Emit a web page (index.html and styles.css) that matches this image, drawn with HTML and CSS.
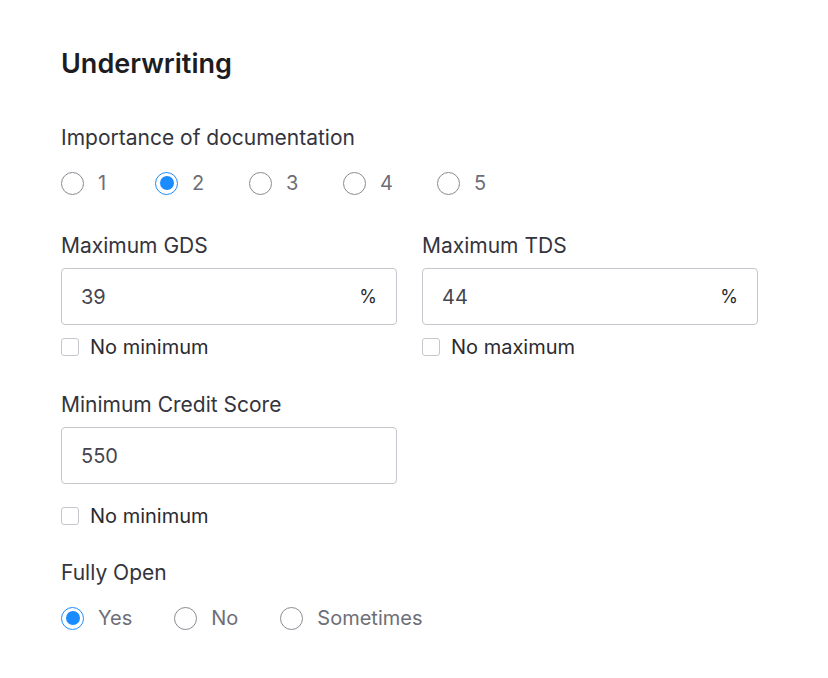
FILE: index.html
```html
<!DOCTYPE html>
<html lang="en">
<head>
    <meta charset="UTF-8">
    <meta name="viewport" content="width=device-width, initial-scale=1.0">
    <title>Underwriting</title>
    <link rel="stylesheet" href="styles.css">
</head>
<body>
    <div class="panel">
        <h1 class="panel-title">Underwriting</h1>

        <div class="field">
            <div class="field-label">Importance of documentation</div>
            <div class="radio-group radio-group-scale">
                <label class="radio"><span class="radio-circle"></span><span>1</span></label>
                <label class="radio"><span class="radio-circle checked"></span><span>2</span></label>
                <label class="radio"><span class="radio-circle"></span><span>3</span></label>
                <label class="radio"><span class="radio-circle"></span><span>4</span></label>
                <label class="radio"><span class="radio-circle"></span><span>5</span></label>
            </div>
        </div>

        <div class="field-row">
            <div class="field">
                <div class="field-label">Maximum GDS</div>
                <div class="input">
                    <span class="input-value">39</span>
                    <span class="input-suffix">%</span>
                </div>
                <label class="checkbox"><span class="checkbox-box"></span><span>No minimum</span></label>
            </div>
            <div class="field">
                <div class="field-label">Maximum TDS</div>
                <div class="input">
                    <span class="input-value">44</span>
                    <span class="input-suffix">%</span>
                </div>
                <label class="checkbox"><span class="checkbox-box"></span><span>No maximum</span></label>
            </div>
        </div>

        <div class="field field-half">
            <div class="field-label">Minimum Credit Score</div>
            <div class="input">
                <span class="input-value">550</span>
            </div>
            <label class="checkbox checkbox-spaced"><span class="checkbox-box"></span><span>No minimum</span></label>
        </div>

        <div class="field">
            <div class="field-label">Fully Open</div>
            <div class="radio-group">
                <label class="radio"><span class="radio-circle checked"></span><span>Yes</span></label>
                <label class="radio"><span class="radio-circle"></span><span>No</span></label>
                <label class="radio"><span class="radio-circle"></span><span>Sometimes</span></label>
            </div>
        </div>
    </div>
</body>
</html>
```

FILE: styles.css
```css
body {
    margin: 0;
    font-family: "Inter", "Noto Sans", sans-serif;
    background-color: #ffffff;
    color: #2b2b30;
}

.panel {
    padding: 47px 61px;
    width: 697px;
}

.panel-title {
    margin: 0 0 43px 0;
    font-size: 27px;
    font-weight: 600;
    color: #1c1c22;
    line-height: 34px;
}

.field {
    margin-bottom: 29px;
}

.field-label {
    font-size: 21px;
    line-height: 28px;
    color: #34343c;
    margin-bottom: 8px;
}

.radio-group {
    display: flex;
    align-items: center;
    gap: 42px;
    margin-top: 17px;
}

.radio-group-scale {
    gap: 0;
}

.radio-group-scale .radio {
    width: 94px;
}

.radio {
    display: inline-flex;
    align-items: center;
    gap: 14px;
    font-size: 20px;
    color: #6e6e78;
    line-height: 28px;
}

.radio-circle {
    width: 21px;
    height: 21px;
    border: 1.5px solid #8a8a92;
    border-radius: 50%;
    box-sizing: content-box;
    position: relative;
}

.radio-circle.checked {
    border-color: #1a8cff;
}

.radio-circle.checked::after {
    content: "";
    position: absolute;
    top: 3.5px;
    left: 3.5px;
    width: 14px;
    height: 14px;
    border-radius: 50%;
    background-color: #1a8cff;
}

.field-row {
    display: grid;
    grid-template-columns: 336px 336px;
    gap: 25px;
    margin-top: 35px;
}

.field-row .field {
    margin-bottom: 30px;
}

.field-half {
    width: 336px;
}

.input {
    height: 55px;
    border: 1px solid #c6c6cc;
    border-radius: 4px;
    display: flex;
    align-items: center;
    justify-content: space-between;
    padding: 0 19px;
    font-size: 20px;
    color: #45454e;
}

.input-suffix {
    font-size: 18px;
    color: #2b2b30;
}

.checkbox {
    display: flex;
    align-items: center;
    gap: 11px;
    margin-top: 8px;
    font-size: 20px;
    color: #2b2b30;
    line-height: 28px;
}

.checkbox-spaced {
    margin-top: 18px;
}

.checkbox-box {
    width: 16px;
    height: 16px;
    border: 1px solid #c6c6cc;
    border-radius: 3px;
}
```
